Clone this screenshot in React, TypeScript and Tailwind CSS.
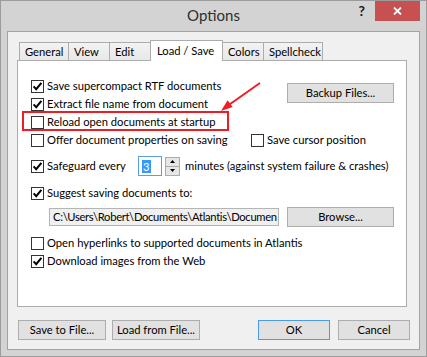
import React from "react";

function Check({ checked }: { checked?: boolean }) {
  return (
    <span className="w-[13px] h-[13px] border border-[#333333] bg-white flex items-center justify-center shrink-0">
      {checked && (
        <svg width="11" height="11" viewBox="0 0 11 11">
          <path d="M1.6 5.4 L4.2 8.2 L9.4 1.8" stroke="#000" strokeWidth="2" fill="none" />
        </svg>
      )}
    </span>
  );
}

function Row({ checked, label, className = "" }: { checked?: boolean; label: string; className?: string }) {
  return (
    <div className={"h-[18px] flex items-center gap-[3px] " + className}>
      <Check checked={checked} />
      <span className="whitespace-nowrap leading-none">{label}</span>
    </div>
  );
}

function Btn({ label, className = "" }: { label: string; className?: string }) {
  return (
    <div
      className={
        "h-[20px] shrink-0 flex items-center justify-center border bg-[#e1e1e1] whitespace-nowrap leading-none " +
        className
      }
    >
      {label}
    </div>
  );
}

export default function App() {
  const tabs = [
    { l: "General", w: "w-[50px]" },
    { l: "View", w: "w-[42px]" },
    { l: "Edit", w: "w-[42px]" },
    { l: "Load / Save", w: "w-[73px]", a: true },
    { l: "Colors", w: "w-[42px]" },
    { l: "Spellcheck", w: "w-[60px]" },
  ];
  return (
    <div className="relative w-[427px] h-[357px] border border-[#9c9c9c] bg-[#d3d3d3] flex flex-col font-['Lato',sans-serif] text-[11.2px] text-black select-none">
      {/* title bar */}
      <div className="h-[30px] shrink-0 flex items-center justify-center text-[15px] text-[#2e2e2e] pb-[1px]">
        Options
      </div>
      <div className="absolute top-0 right-[6px] flex items-start">
        <span className="mr-[10px] mt-[2px] text-[14px] font-bold text-[#1a1a1a] leading-[16px]">?</span>
        <div className="w-[45px] h-[20px] bg-[#c75050] flex items-center justify-center">
          <svg width="9" height="8" viewBox="0 0 9 8">
            <path d="M1 0.5 L8 7.5 M8 0.5 L1 7.5" stroke="#fff" strokeWidth="1.8" />
          </svg>
        </div>
      </div>

      {/* client area */}
      <div className="flex-1 mx-[6px] mb-[6px] border border-[#a3a3a3] bg-[#f0f0f0] flex flex-col pt-[8px]">
        {/* tab row */}
        <div className="relative z-10 h-[20px] ml-[9px] pl-[2px] flex items-end">
          {tabs.map((t, i) =>
            t.a ? (
              <div
                key={i}
                className={
                  t.w +
                  " -ml-px h-[21px] -mb-px bg-white border border-b-0 border-[#acacac] flex items-center pl-[6px] whitespace-nowrap leading-none"
                }
              >
                {t.l}
              </div>
            ) : (
              <div
                key={i}
                className={
                  t.w +
                  (i === 0 ? "" : " -ml-px") +
                  " h-[18px] bg-gradient-to-b from-[#f3f3f3] to-[#e8e8e8] border border-b-0 border-[#acacac] flex items-center pl-[5px] whitespace-nowrap leading-none"
                }
              >
                {t.l}
              </div>
            )
          )}
        </div>
        {/* page */}
        <div className="h-[247px] ml-[9px] mr-[12px] border border-[#acacac] bg-white pl-[13px] pr-[12px] pt-[16px] flex flex-col">
          <div className="flex">
            <div className="flex flex-col">
              <Row checked label="Save supercompact RTF documents" />
              <Row checked label="Extract file name from document" />
            </div>
            <Btn label="Backup Files..." className="ml-auto mt-[6px] w-[107px] border-[#adadad]" />
          </div>
          <Row label="Reload open documents at startup" />
          <div className="flex">
            <div className="w-[220px] shrink-0">
              <Row label="Offer document properties on saving" />
            </div>
            <Row label="Save cursor position" />
          </div>
          <div className="mt-[7px] h-[20px] flex items-center">
            <Check checked />
            <span className="ml-[3px] w-[91px] shrink-0 whitespace-nowrap leading-none">Safeguard every</span>
            <div className="w-[24px] h-[20px] shrink-0 border border-[#5a9de0] bg-white flex items-center pl-[3px]">
              <span className="bg-[#3399ff] text-white leading-[13px] px-[1px]">3</span>
            </div>
            <div className="ml-[3px] w-[15px] h-[19px] shrink-0 flex flex-col">
              <div className="h-[10px] border border-[#acacac] bg-[#e6e6e6] flex items-center justify-center">
                <svg width="5" height="3" viewBox="0 0 5 3">
                  <path d="M0 3 L2.5 0 L5 3 Z" fill="#000" />
                </svg>
              </div>
              <div className="h-[10px] -mt-px border border-[#acacac] bg-[#e6e6e6] flex items-center justify-center">
                <svg width="5" height="3" viewBox="0 0 5 3">
                  <path d="M0 0 L2.5 3 L5 0 Z" fill="#000" />
                </svg>
              </div>
            </div>
            <span className="ml-[5px] whitespace-nowrap leading-none">minutes (against system failure &amp; crashes)</span>
          </div>
          <Row checked label="Suggest saving documents to:" className="mt-[8px]" />
          <div className="mt-[5px] flex items-center">
            <div className="ml-[18px] w-[230px] h-[18px] shrink-0 border border-[#b5b5b5] bg-[#f0f0f0] overflow-hidden flex items-center pl-[3px] whitespace-nowrap leading-none tracking-[-0.3px]">
              C:\Users\Robert\Documents\Atlantis\Documen
            </div>
            <Btn label="Browse..." className="ml-auto w-[107px] border-[#adadad]" />
          </div>
          <Row label="Open hyperlinks to supported documents in Atlantis" className="mt-[7px]" />
          <Row checked label="Download images from the Web" />
        </div>
        {/* bottom buttons */}
        <div className="mt-[13px] ml-[10px] mr-[9px] flex">
          <Btn label="Save to File..." className="w-[88px] border-[#adadad]" />
          <Btn label="Load from File..." className="ml-[6px] w-[88px] border-[#adadad]" />
          <Btn label="OK" className="ml-auto w-[72px] border-[#4a9be8]" />
          <Btn label="Cancel" className="ml-[8px] w-[72px] border-[#adadad]" />
        </div>
      </div>

      {/* annotation overlay */}
      <div className="absolute left-[21px] top-[110px] w-[207px] h-[20px] border-2 border-[#ee1c24] pointer-events-none" />
      <svg className="absolute left-[213px] top-[76px] pointer-events-none" width="52" height="40" viewBox="0 0 52 40">
        <path d="M46 6 L14 28.5" stroke="#ee1c24" strokeWidth="2" fill="none" />
        <path d="M7 34 L13.6 23.3 L18.6 30 Z" fill="#ee1c24" />
      </svg>
    </div>
  );
}
